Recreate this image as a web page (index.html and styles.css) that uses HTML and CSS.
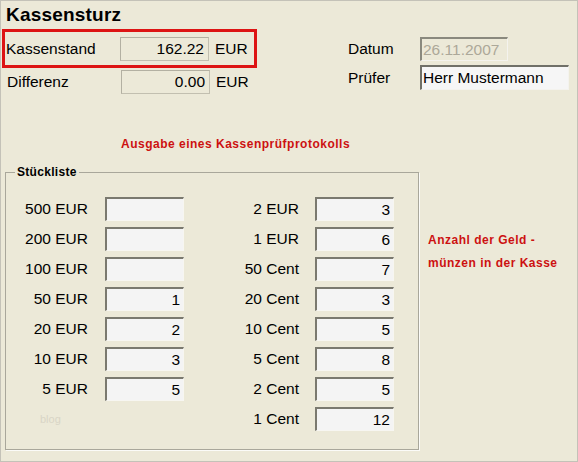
FILE: index.html
```html
<!DOCTYPE html>
<html lang="de">
  <head>
    <meta charset="UTF-8" />
    <title>Kassensturz</title>
    <link rel="stylesheet" href="styles.css">
  </head>
  <body>
    <div class="window">
      <h1 class="title">Kassensturz</h1>

      <div class="top">
        <div class="totals">
          <div class="row highlight">
            <label class="label">Kassenstand</label>
            <input class="field flat" value="162.22" readonly />
            <span class="unit">EUR</span>
          </div>
          <div class="row plain">
            <label class="label">Differenz</label>
            <input class="field flat" value="0.00" readonly />
            <span class="unit">EUR</span>
          </div>
        </div>

        <div class="meta">
          <div class="row">
            <label class="label meta-label">Datum</label>
            <input class="field date" value="26.11.2007" disabled />
          </div>
          <div class="row spaced">
            <label class="label meta-label">Prüfer</label>
            <input class="field name" value="Herr Mustermann" />
          </div>
        </div>
      </div>

      <p class="notice">Ausgabe eines Kassenprüfprotokolls</p>

      <div class="middle">
        <fieldset class="group">
          <legend>Stückliste</legend>
          <div class="columns">
            <div class="col notes">
              <div class="item"><span class="name-label">500 EUR</span><input class="count" value="" /></div>
              <div class="item"><span class="name-label">200 EUR</span><input class="count" value="" /></div>
              <div class="item"><span class="name-label">100 EUR</span><input class="count" value="" /></div>
              <div class="item"><span class="name-label">50 EUR</span><input class="count" value="1" /></div>
              <div class="item"><span class="name-label">20 EUR</span><input class="count" value="2" /></div>
              <div class="item"><span class="name-label">10 EUR</span><input class="count" value="3" /></div>
              <div class="item"><span class="name-label">5 EUR</span><input class="count" value="5" /></div>
              <div class="item"><span class="watermark">blog</span></div>
            </div>
            <div class="col coins">
              <div class="item"><span class="name-label">2 EUR</span><input class="count" value="3" /></div>
              <div class="item"><span class="name-label">1 EUR</span><input class="count" value="6" /></div>
              <div class="item"><span class="name-label">50 Cent</span><input class="count" value="7" /></div>
              <div class="item"><span class="name-label">20 Cent</span><input class="count" value="3" /></div>
              <div class="item"><span class="name-label">10 Cent</span><input class="count" value="5" /></div>
              <div class="item"><span class="name-label">5 Cent</span><input class="count" value="8" /></div>
              <div class="item"><span class="name-label">2 Cent</span><input class="count" value="5" /></div>
              <div class="item"><span class="name-label">1 Cent</span><input class="count" value="12" /></div>
            </div>
          </div>
        </fieldset>

        <p class="hint">Anzahl der Geld -<br />münzen in der Kasse</p>
      </div>
    </div>
  </body>
</html>
```

FILE: styles.css
```css
body {
  margin: 0;
  font-family: "Liberation Sans", Arial, sans-serif;
  color: #000;
}

.window {
  box-sizing: border-box;
  width: 578px;
  height: 462px;
  background-color: #ece9d8;
  border: 1px solid #c4c2b8;
}

.title {
  margin: 0;
  padding: 3px 0 0 5px;
  font-size: 19px;
  line-height: 22px;
  font-weight: bold;
  letter-spacing: 0.2px;
}

.top {
  display: flex;
  margin-top: 3px;
}

.totals {
  margin-left: 1px;
}

.row {
  display: flex;
  align-items: center;
}

.label {
  font-size: 15.5px;
}

.totals .label {
  width: 114px;
}

.highlight {
  box-sizing: border-box;
  width: 255px;
  padding: 5px 0 4px 1px;
  border: 3px solid #dd1414;
}

.plain {
  margin-top: 2px;
  padding-left: 5px;
}

.unit {
  margin-left: 6px;
  font-size: 15.5px;
}

.field {
  box-sizing: border-box;
  height: 24px;
  margin: 0;
  font-family: "Liberation Sans", Arial, sans-serif;
  font-size: 15.5px;
  color: #000;
  outline: none;
}

.flat {
  width: 89px;
  padding: 0 4px 0 0;
  text-align: right;
  background-color: #ece9d8;
  border: 1px solid #c2bfb0;
  border-top-color: #b3b0a2;
  border-left-color: #b3b0a2;
}

.meta {
  margin-left: 91px;
  padding-top: 8px;
}

.meta-label {
  width: 72px;
}

.spaced {
  margin-top: 4px;
}

.date {
  width: 88px;
  padding: 0 0 0 1px;
  color: #aca899;
  background-color: #ece9d8;
  border: 1px solid #f4f3ee;
  border-top: 2px solid #8a897e;
  border-left: 2px solid #8a897e;
}

.name {
  width: 149px;
  height: 25px;
  padding: 0 0 0 1px;
  background-color: #f6f6f6;
  border: 1px solid #f4f3ee;
  border-top: 2px solid #707068;
  border-left: 2px solid #707068;
}

.notice {
  margin: 43px 0 0 120px;
  font-size: 12px;
  line-height: 14px;
  font-weight: bold;
  letter-spacing: 0.5px;
  color: #cc1111;
}

.middle {
  display: flex;
  margin-top: 14px;
}

.group {
  box-sizing: border-box;
  width: 414px;
  min-width: 0;
  margin: 0 0 0 4px;
  padding: 18px 0 18px 0;
  border: 1px solid #a9a79b;
  box-shadow: 1px 1px 0 #fbfbf8;
}

.group legend {
  margin-left: 9px;
  padding: 0 2px;
  font-size: 12px;
  line-height: 14px;
  font-weight: bold;
  letter-spacing: 0.3px;
}

.columns {
  display: flex;
}

.item {
  display: flex;
  align-items: center;
  height: 24px;
  margin-bottom: 6px;
}

.item:last-child {
  margin-bottom: 0;
}

.name-label {
  font-size: 15.5px;
  text-align: right;
}

.notes .name-label {
  width: 82px;
  margin-right: 17px;
}

.coins .name-label {
  width: 115px;
  margin-right: 16px;
}

.count {
  box-sizing: border-box;
  width: 79px;
  height: 24px;
  margin: 0;
  padding: 0 3px 0 0;
  text-align: right;
  font-family: "Liberation Sans", Arial, sans-serif;
  font-size: 15.5px;
  color: #000;
  background-color: #f4f4f4;
  border: 1px solid #f7f6f1;
  border-top: 2px solid #7a796f;
  border-left: 2px solid #7a796f;
  outline: none;
}

.watermark {
  margin-left: 34px;
  font-size: 11px;
  color: #d9d5c6;
}

.hint {
  margin: 64px 0 0 9px;
  font-size: 12px;
  line-height: 23px;
  font-weight: bold;
  letter-spacing: 0.5px;
  color: #cc1111;
}
```
